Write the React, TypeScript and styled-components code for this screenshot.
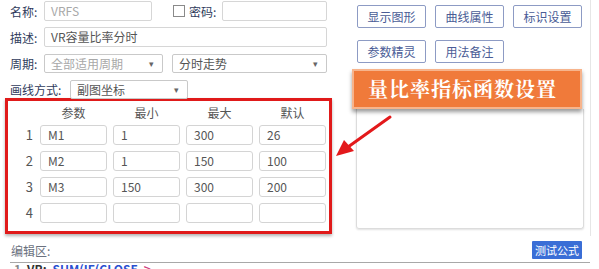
import styled, { createGlobalStyle } from 'styled-components';

const GlobalStyle = createGlobalStyle`
  html, body {
    margin: 0;
    padding: 0;
    background: #ffffff;
  }
  body {
    font-family: "Noto Sans CJK SC", "Noto Sans", "Liberation Sans", sans-serif;
    font-size: 12px;
  }
`;

const params = [
  { id: 1, name: 'M1', min: '1', max: '300', def: '26' },
  { id: 2, name: 'M2', min: '1', max: '150', def: '100' },
  { id: 3, name: 'M3', min: '150', max: '300', def: '200' },
  { id: 4, name: '', min: '', max: '', def: '' },
];

export default function App() {
  return (
    <>
      <GlobalStyle />
      <Page>
        <Top>
          <LeftCol>
            <FormRow>
              <Label>名称:</Label>
              <Field width={108} muted>VRFS</Field>
              <CheckGroup>
                <CheckBox />
                <Label>密码:</Label>
              </CheckGroup>
              <Field width={105} />
            </FormRow>
            <FormRow>
              <Label>描述:</Label>
              <Field width={283}>VR容量比率分时</Field>
            </FormRow>
            <FormRow>
              <Label>周期:</Label>
              <Select width={119} muted>
                全部适用周期
                <Caret>▾</Caret>
              </Select>
              <Select width={155} style={{ marginLeft: 9 }}>
                分时走势
                <Caret>▾</Caret>
              </Select>
            </FormRow>
            <FormRow>
              <Label wide>画线方式:</Label>
              <Select width={118}>
                副图坐标
                <Caret>▾</Caret>
              </Select>
            </FormRow>
            <RedBox>
              <ParamGrid>
                <span />
                <HeadCell>参数</HeadCell>
                <HeadCell>最小</HeadCell>
                <HeadCell>最大</HeadCell>
                <HeadCell>默认</HeadCell>
                {params.map((p) => (
                  <Row key={p.id}>
                    <RowNum>{p.id}</RowNum>
                    <Cell>{p.name}</Cell>
                    <Cell>{p.min}</Cell>
                    <Cell>{p.max}</Cell>
                    <Cell>{p.def}</Cell>
                  </Row>
                ))}
              </ParamGrid>
            </RedBox>
          </LeftCol>
          <RightCol>
            <ButtonGrid>
              <ToolButton>显示图形</ToolButton>
              <ToolButton>曲线属性</ToolButton>
              <ToolButton>标识设置</ToolButton>
              <ToolButton>参数精灵</ToolButton>
              <ToolButton>用法备注</ToolButton>
            </ButtonGrid>
            <Banner>量比率指标函数设置</Banner>
            <NotePanel />
          </RightCol>
          <Arrow width="60" height="45" viewBox="0 0 60 45">
            <line x1="56" y1="3" x2="14" y2="33" stroke="#e3191b" strokeWidth="3" strokeLinecap="round" />
            <polygon points="2,42 10,26 20,37" fill="#e3191b" />
          </Arrow>
        </Top>
        <BottomBar>
          <EditLabel>编辑区:</EditLabel>
          <BlueButton>测试公式</BlueButton>
        </BottomBar>
        <Editor>
          <Code color="#888">1</Code>
          <Code color="#333">VR:</Code>
          <Code color="#2a4fd0">SUM(IF(CLOSE</Code>
          <Code color="#d04080">&gt;</Code>
        </Editor>
      </Page>
    </>
  );
}

const Page = styled.div`
  position: relative;
  width: 599px;
  height: 269px;
  overflow: hidden;
  display: flex;
  flex-direction: column;
`;

const Top = styled.div`
  position: relative;
  display: flex;
  height: 236px;
  flex: none;
`;

const LeftCol = styled.div`
  width: 352px;
  display: flex;
  flex-direction: column;
  padding-top: 1px;
  box-sizing: border-box;
`;

const FormRow = styled.div`
  display: flex;
  align-items: center;
  height: 20px;
  padding-left: 10px;
  margin-bottom: 6px;
`;

const Label = styled.span<{ wide?: boolean }>`
  width: ${(p) => (p.wide ? 60 : 34)}px;
  color: #2f3b5c;
  font-size: 12px;
  white-space: nowrap;
`;

const Field = styled.div<{ width: number; muted?: boolean }>`
  width: ${(p) => p.width}px;
  height: 20px;
  box-sizing: border-box;
  border: 1px solid #d6d6d6;
  border-radius: 2px;
  padding-left: 6px;
  line-height: 18px;
  color: ${(p) => (p.muted ? '#a8a8a8' : '#555')};
  font-size: 12px;
  background: #fff;
`;

const CheckGroup = styled.div`
  display: flex;
  align-items: center;
  margin-left: 21px;
  width: 49px;
`;

const CheckBox = styled.span`
  width: 10px;
  height: 10px;
  border: 1px solid #8a8a8a;
  margin-right: 4px;
  flex: none;
`;

const Select = styled(Field)`
  position: relative;
  height: 19px;
  line-height: 17px;
  border-color: #c9c9c9;
`;

const Caret = styled.span`
  position: absolute;
  right: 8px;
  top: 0;
  font-size: 9px;
  color: #666;
`;

const RedBox = styled.div`
  margin-left: 5px;
  margin-top: -7px;
  width: 327px;
  height: 136px;
  box-sizing: border-box;
  border: 3px solid #e01a1a;
  box-shadow: 0 2px 3px rgba(0, 0, 0, 0.3);
  padding: 6px 0 0 0;
`;

const ParamGrid = styled.div`
  display: grid;
  grid-template-columns: 26px 67px 67px 67px 67px;
  grid-template-rows: 12px;
  grid-auto-rows: 20px;
  column-gap: 6px;
  row-gap: 6px;
`;

const HeadCell = styled.span`
  text-align: center;
  color: #555;
  font-size: 12px;
  line-height: 12px;
`;

const Row = styled.div`
  display: contents;
`;

const RowNum = styled.span`
  text-align: right;
  color: #555;
  font-size: 13px;
  line-height: 20px;
  padding-right: 1px;
`;

const Cell = styled.div`
  border: 1px solid #d4d4d4;
  border-radius: 3px;
  box-sizing: border-box;
  padding-left: 7px;
  line-height: 18px;
  color: #555;
  font-size: 12px;
`;

const RightCol = styled.div`
  width: 239px;
  display: flex;
  flex-direction: column;
  padding-top: 5px;
  box-sizing: border-box;
  border-right: 1px solid #e6e6e6;
`;

const ButtonGrid = styled.div`
  display: grid;
  grid-template-columns: repeat(3, 69px);
  grid-auto-rows: 23px;
  column-gap: 9px;
  row-gap: 12px;
  padding-left: 5px;
`;

const ToolButton = styled.div`
  border: 1px solid #8d9bc4;
  border-radius: 2px;
  color: #4a5c96;
  font-size: 12px;
  text-align: center;
  line-height: 21px;
  background: #fff;
`;

const Banner = styled.div`
  position: relative;
  z-index: 1;
  margin-top: 6px;
  width: 230px;
  height: 40px;
  box-sizing: border-box;
  background: #f07a3a;
  border: 2px solid #f7b48c;
  box-shadow: 0 3px 4px rgba(0, 0, 0, 0.4);
  color: #ffffff;
  font-family: "Noto Serif CJK SC", "Noto Sans CJK SC", serif;
  font-size: 20px;
  font-weight: 700;
  letter-spacing: 1px;
  line-height: 36px;
  padding-left: 14px;
`;

const NotePanel = styled.div`
  margin-left: 4px;
  width: 228px;
  height: 120px;
  box-sizing: border-box;
  border: 1px solid #dcdcdc;
  border-top: none;
  border-radius: 0 0 3px 3px;
  box-shadow: 0 1px 2px rgba(0, 0, 0, 0.12);
`;

const Arrow = styled.svg`
  position: absolute;
  left: 334px;
  top: 114px;
`;

const BottomBar = styled.div`
  display: flex;
  align-items: center;
  justify-content: space-between;
  height: 26px;
  flex: none;
  padding: 0 17px 0 11px;
`;

const EditLabel = styled.span`
  color: #6b7280;
  font-size: 12px;
  margin-top: 2px;
`;

const BlueButton = styled.div`
  width: 50px;
  height: 18px;
  background: #3a6ed6;
  color: #fff;
  font-size: 11px;
  text-align: center;
  line-height: 18px;
  border-radius: 1px;
  margin-top: 1px;
`;

const Editor = styled.div`
  flex: none;
  margin: 0 9px 0 10px;
  border-top: 1px solid #a8a8a8;
  padding: 0 0 0 4px;
  display: flex;
  gap: 6px;
  font-size: 12px;
  line-height: 12px;
`;

const Code = styled.span<{ color: string }>`
  color: ${(p) => p.color};
  font-weight: 700;
`;
